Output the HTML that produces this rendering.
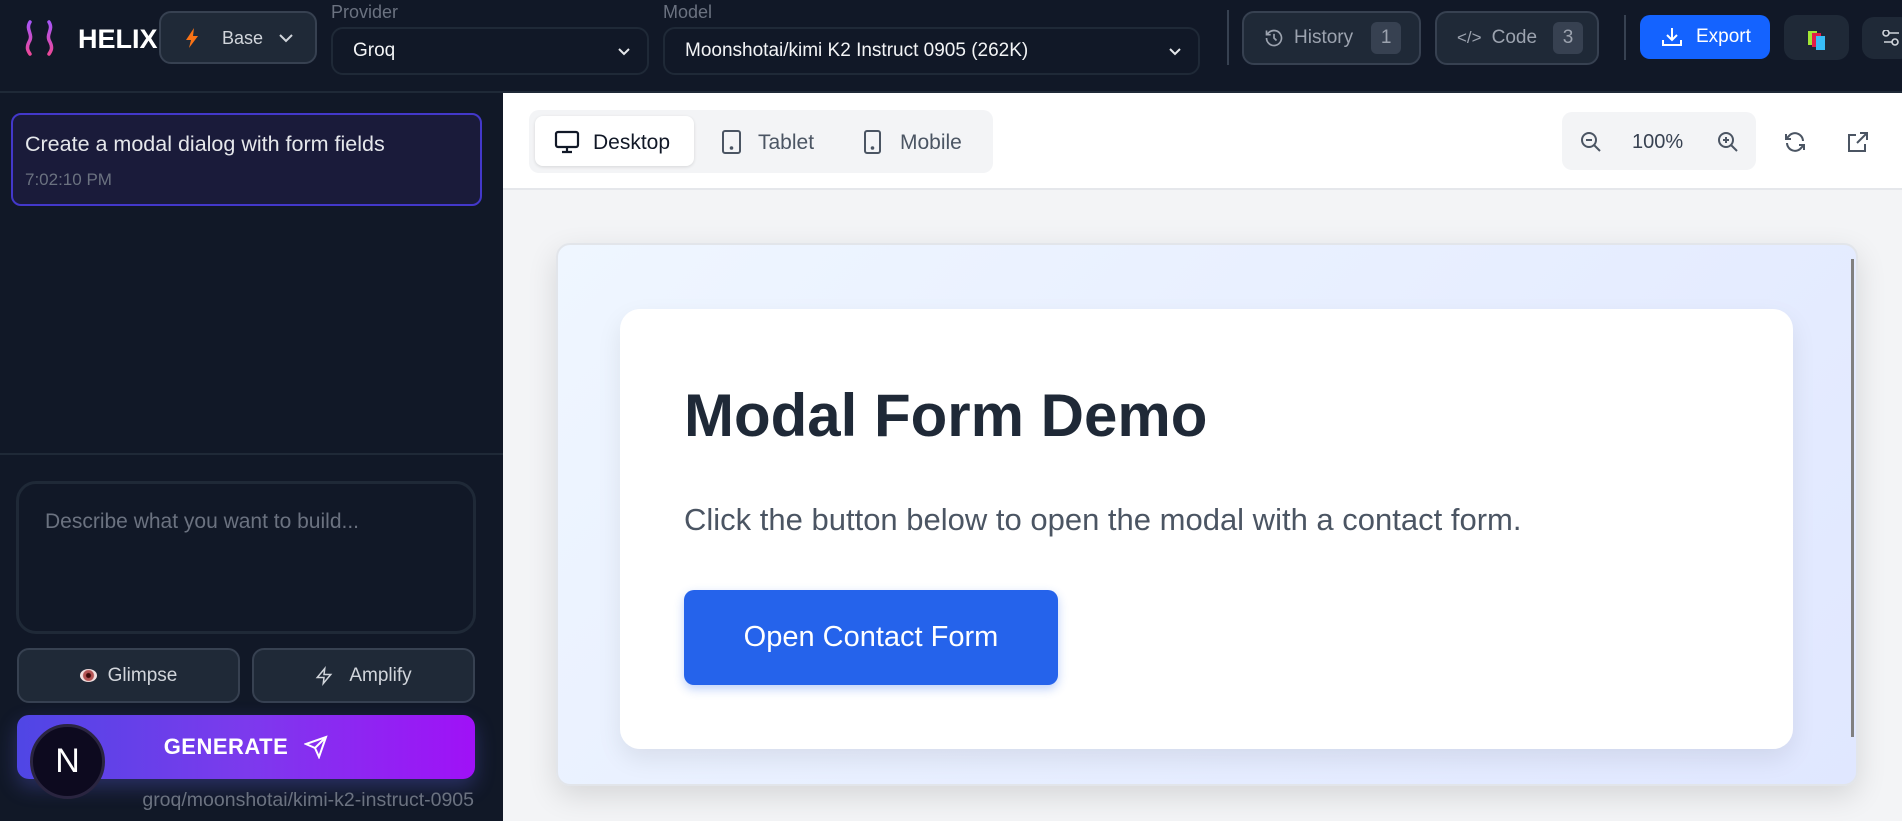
<!DOCTYPE html>
<html><head><meta charset="utf-8"><style>
*{box-sizing:border-box;margin:0;padding:0}
body{width:1902px;height:821px;overflow:hidden;font-family:"Liberation Sans",sans-serif;background:#f3f4f6;position:relative}
.a{position:absolute}
.hdr{left:0;top:0;width:1902px;height:93px;background:#111827;border-bottom:2px solid #1f2937}
.btn{background:#1f2937;border:2px solid #374151;border-radius:12px;color:#d1d5db;display:flex;align-items:center}
.sel{background:#111827;border:2px solid #1f2937;border-radius:12px;color:#f3f4f6;font-size:19px;display:flex;align-items:center;padding-left:20px}
.lbl{color:#6b7280;font-size:18px}
.badge{background:#374151;color:#9ca3af;border-radius:6px;width:30px;height:32px;display:flex;align-items:center;justify-content:center;font-size:19px}
.side{left:0;top:93px;width:503px;height:728px;background:#111827}
</style></head><body>
<div class="a hdr"></div>
<svg class="a" style="left:24px;top:20px" width="32" height="36" viewBox="0 0 32 36"><defs><linearGradient id="lg" x1="0" y1="0" x2="0" y2="1"><stop offset="0" stop-color="#a855f7"/><stop offset="1" stop-color="#ec4899"/></linearGradient></defs><path d="M6 2 C1 10 10 14 5 22 C2 28 4 31 6 34" stroke="url(#lg)" stroke-width="3.5" fill="none" stroke-linecap="round"/><path d="M25 2 C30 10 21 14 26 22 C29 28 27 31 25 34" stroke="url(#lg)" stroke-width="3.5" fill="none" stroke-linecap="round"/></svg>
<div class="a" style="left:78px;top:24px;color:#fff;font-weight:bold;font-size:27px">HELIX</div>
<div class="a btn" style="left:159px;top:11px;width:158px;height:53px"></div>
<svg class="a" style="left:185px;top:27px" width="14" height="22" viewBox="0 0 14 22"><path d="M9 1L1 13h5l-2 8 9-12H8z" fill="#f97316"/></svg>
<div class="a" style="left:222px;top:28px;font-size:18px;color:#d1d5db">Base</div>
<svg class="a" style="left:278px;top:33px" width="16" height="10"><path d="M2 2l6 6 6-6" stroke="#d1d5db" stroke-width="2" fill="none"/></svg>
<div class="a lbl" style="left:331px;top:2px">Provider</div>
<div class="a sel" style="left:331px;top:27px;width:318px;height:48px">Groq<svg style="position:absolute;right:16px" width="14" height="9"><path d="M2 2l5 5 5-5" stroke="#e5e7eb" stroke-width="2" fill="none"/></svg></div>
<div class="a lbl" style="left:663px;top:2px">Model</div>
<div class="a sel" style="left:663px;top:27px;width:537px;height:48px">Moonshotai/kimi K2 Instruct 0905 (262K)<svg style="position:absolute;right:16px" width="14" height="9"><path d="M2 2l5 5 5-5" stroke="#e5e7eb" stroke-width="2" fill="none"/></svg></div>
<div class="a" style="left:1227px;top:10px;width:2px;height:55px;background:#374151"></div>
<div class="a btn" style="left:1242px;top:11px;width:179px;height:54px"><svg style="margin-left:20px" width="20" height="20" viewBox="0 0 24 24" fill="none" stroke="#9ca3af" stroke-width="2"><path d="M3 12a9 9 0 1 0 3-6.7L3 8M3 3v5h5M12 7v5l3 3"/></svg><span style="margin-left:10px;font-size:19px;color:#9ca3af">History</span><div class="badge" style="margin-left:18px">1</div></div>
<div class="a btn" style="left:1435px;top:11px;width:164px;height:54px"><span style="margin-left:20px;font-size:17px;color:#9ca3af">&lt;/&gt;</span><span style="margin-left:10px;font-size:19px;color:#9ca3af">Code</span><div class="badge" style="margin-left:16px">3</div></div>
<div class="a" style="left:1624px;top:15px;width:2px;height:45px;background:#374151"></div>
<div class="a" style="left:1640px;top:15px;width:130px;height:44px;background:#1463ff;border-radius:10px;color:#fff;display:flex;align-items:center;font-size:19px"><svg style="margin-left:20px" width="24" height="24" viewBox="0 0 24 24" fill="none" stroke="#fff" stroke-width="2"><path d="M12 3v12M7 10l5 5 5-5M3 15v5h18v-5"/></svg><span style="margin-left:12px">Export</span></div>
<div class="a" style="left:1784px;top:15px;width:65px;height:45px;background:#1f2937;border-radius:12px"><div class="a" style="left:24px;top:16px;width:9px;height:14px;background:#a3e635"></div><div class="a" style="left:28px;top:18px;width:9px;height:14px;background:#e11d48"></div><div class="a" style="left:32px;top:21px;width:9px;height:14px;background:#38bdf8"></div></div>
<div class="a" style="left:1862px;top:17px;width:50px;height:42px;background:#1f2937;border-radius:12px"><svg class="a" style="left:20px;top:13px" width="20" height="16"><circle cx="4" cy="3" r="3" stroke="#d1d5db" stroke-width="1.6" fill="none"/><path d="M7 3h10M2 12h8" stroke="#d1d5db" stroke-width="1.6"/><circle cx="13" cy="12" r="3" stroke="#d1d5db" stroke-width="1.6" fill="none"/></svg></div>

<div class="a side"></div>
<div class="a" style="left:11px;top:113px;width:471px;height:93px;background:#1a1b3a;border:2px solid #4338ca;border-radius:10px"></div>
<div class="a" style="left:25px;top:132px;color:#e5e7eb;font-size:21.5px">Create a modal dialog with form fields</div>
<div class="a" style="left:25px;top:170px;color:#6b7280;font-size:17px">7:02:10 PM</div>
<div class="a" style="left:0;top:453px;width:503px;height:2px;background:#1f2937"></div>
<div class="a" style="left:16px;top:481px;width:460px;height:153px;border:3px solid #1f2937;border-radius:20px;background:#111827"></div>
<div class="a" style="left:45px;top:510px;color:#6b7280;font-size:21px">Describe what you want to build...</div>
<div class="a btn" style="left:17px;top:648px;width:223px;height:55px;justify-content:center;font-size:19px;color:#d1d5db"><span style="display:inline-block;width:17px;height:13px;border-radius:50%;background:radial-gradient(circle,#3b0a0a 0 2px,#b45454 3px 5px,#f3e1e1 6px);margin-right:11px"></span>Glimpse</div>
<div class="a btn" style="left:252px;top:648px;width:223px;height:55px;justify-content:center;font-size:19px;color:#d1d5db"><svg width="18" height="20" viewBox="0 0 24 24" fill="none" stroke="#d1d5db" stroke-width="2" style="margin-right:16px"><path d="M13 2L3 14h9l-1 8 10-12h-9l1-8z"/></svg>Amplify</div>
<div class="a" style="left:17px;top:715px;width:458px;height:64px;border-radius:12px;background:linear-gradient(90deg,#4f46e5,#7c3aed 50%,#a011f7);box-shadow:0 8px 20px rgba(99,102,241,.3);color:#fff;font-weight:bold;font-size:22px;display:flex;align-items:center;justify-content:center;letter-spacing:.5px">GENERATE<svg style="margin-left:16px" width="24" height="24" viewBox="0 0 24 24" fill="none" stroke="#fff" stroke-width="2"><path d="M22 2L11 13M22 2l-7 20-4-9-9-4z"/></svg></div>
<div class="a" style="left:30px;top:724px;width:75px;height:75px;border-radius:50%;background:#0d0a1f;border:3px solid #2a2540;color:#fff;font-size:34px;display:flex;align-items:center;justify-content:center">N</div>
<div class="a" style="right:1428px;top:789px;color:#6b7280;font-size:19.5px">groq/moonshotai/kimi-k2-instruct-0905</div>

<div class="a" style="left:503px;top:93px;width:1399px;height:97px;background:#fff;border-bottom:2px solid #e5e7eb"></div>
<div class="a" style="left:529px;top:110px;width:464px;height:63px;background:#f3f4f6;border-radius:10px"></div>
<div class="a" style="left:535px;top:116px;width:159px;height:50px;background:#fff;border-radius:8px;box-shadow:0 1px 3px rgba(0,0,0,.12)"></div>
<svg class="a" style="left:554px;top:130px" width="26" height="24" viewBox="0 0 26 24" fill="none" stroke="#111827" stroke-width="2.2"><rect x="2" y="2" width="22" height="15" rx="2"/><path d="M13 17v4M8 22h10"/></svg>
<div class="a" style="left:593px;top:131px;font-size:21px;color:#111827">Desktop</div>
<svg class="a" style="left:721px;top:129px" width="22" height="26" fill="none" stroke="#4b5563" stroke-width="2"><rect x="2" y="2" width="17" height="22" rx="2"/><circle cx="10.5" cy="19" r=".8" fill="#4b5563"/></svg>
<div class="a" style="left:758px;top:131px;font-size:21px;color:#4b5563">Tablet</div>
<svg class="a" style="left:863px;top:129px" width="20" height="26" fill="none" stroke="#4b5563" stroke-width="2"><rect x="2" y="2" width="15" height="22" rx="2"/><circle cx="9.5" cy="19" r=".8" fill="#4b5563"/></svg>
<div class="a" style="left:900px;top:131px;font-size:21px;color:#4b5563">Mobile</div>
<div class="a" style="left:1562px;top:112px;width:194px;height:58px;background:#f3f4f6;border-radius:10px"></div>
<svg class="a" style="left:1579px;top:130px" width="24" height="24" viewBox="0 0 24 24" fill="none" stroke="#4b5563" stroke-width="2"><circle cx="10" cy="10" r="7"/><path d="M15 15l6 6M7 10h6"/></svg>
<div class="a" style="left:1632px;top:131px;font-size:20px;color:#374151">100%</div>
<svg class="a" style="left:1716px;top:130px" width="24" height="24" viewBox="0 0 24 24" fill="none" stroke="#4b5563" stroke-width="2"><circle cx="10" cy="10" r="7"/><path d="M15 15l6 6M7 10h6M10 7v6"/></svg>
<svg class="a" style="left:1783px;top:130px" width="24" height="24" viewBox="0 0 24 24" fill="none" stroke="#4b5563" stroke-width="2"><path d="M20 11A8 8 0 0 0 5.5 6.5L3 9M3 4v5h5M4 13a8 8 0 0 0 14.5 4.5L21 15M21 20v-5h-5"/></svg>
<svg class="a" style="left:1846px;top:130px" width="24" height="24" viewBox="0 0 24 24" fill="none" stroke="#4b5563" stroke-width="2"><path d="M14 3h7v7M21 3l-10 10M19 14v7H3V5h7"/></svg>

<div class="a" style="left:556px;top:243px;width:1302px;height:543px;border:2px solid #e2e5ea;border-radius:14px;background:linear-gradient(135deg,#eff6ff,#e0e7ff);box-shadow:0 10px 30px rgba(0,0,0,.12)"></div>
<div class="a" style="left:1851px;top:259px;width:3px;height:478px;background:#808080"></div>
<div class="a" style="left:620px;top:309px;width:1173px;height:440px;background:#fff;border-radius:20px;box-shadow:0 10px 25px rgba(0,0,0,.08)"></div>
<div class="a" style="left:684px;top:381px;font-size:60px;font-weight:bold;color:#1f2937">Modal Form Demo</div>
<div class="a" style="left:684px;top:502px;font-size:31px;color:#4b5563">Click the button below to open the modal with a contact form.</div>
<div class="a" style="left:684px;top:590px;width:374px;height:95px;background:#2563eb;border-radius:10px;color:#fff;font-size:29px;display:flex;align-items:center;justify-content:center;box-shadow:0 4px 10px rgba(37,99,235,.3)">Open Contact Form</div>
</body></html>
